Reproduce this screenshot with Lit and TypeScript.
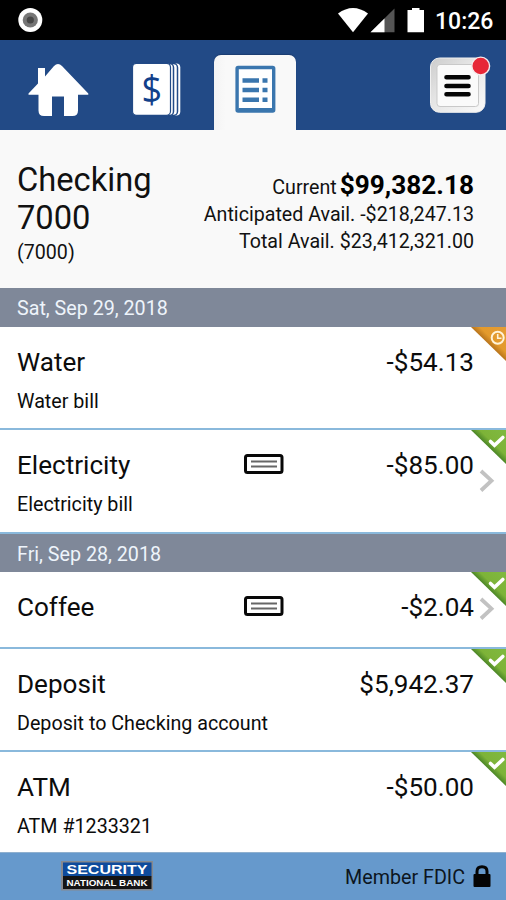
import { LitElement, html, css, svg, nothing } from "lit";
import { customElement, property } from "lit/decorators.js";

interface Transaction {
  name: string;
  amount: string;
  memo?: string;
  pending?: boolean;
  check?: boolean;
  more?: boolean;
}

interface Day {
  date: string;
  items: Transaction[];
}

const DAYS: Day[] = [
  {
    date: "Sat, Sep 29, 2018",
    items: [
      { name: "Water", amount: "-$54.13", memo: "Water bill", pending: true },
      { name: "Electricity", amount: "-$85.00", memo: "Electricity bill", check: true, more: true },
    ],
  },
  {
    date: "Fri, Sep 28, 2018",
    items: [
      { name: "Coffee", amount: "-$2.04", check: true, more: true },
      { name: "Deposit", amount: "$5,942.37", memo: "Deposit to Checking account" },
      { name: "ATM", amount: "-$50.00", memo: "ATM #1233321" },
    ],
  },
];

@customElement("status-bar")
class StatusBar extends LitElement {
  static styles = css`
    :host {
      display: flex;
      justify-content: space-between;
      flex-shrink: 0;
      height: 39.5px;
      background: #000;
      color: #fff;
    }
    .record { margin-left: 17px; }
    .right { display: flex; }
    .time {
      width: 77px;
      padding-left: 6px;
      box-sizing: border-box;
      font: 500 23px/43px Roboto, sans-serif;
      white-space: nowrap;
    }
  `;
  render() {
    return html`
      <svg class="record" width="26" height="39">
        <circle cx="13.3" cy="20" r="12" fill="#fff" />
        <circle cx="13.3" cy="20" r="7.6" fill="#777" />
        <circle cx="13.3" cy="20" r="3.6" fill="#484848" />
      </svg>
      <div class="right">
        <svg width="92" height="39" viewBox="337 0 92 39" fill="#fff">
          <path d="M338 13.5Q353 2.5 368 13.5L353 32.3Z" />
          <path d="M394.500 8.500V32.300H370.500Z" fill="#555" />
          <path d="M384.500 18.400V32.300H370.500Z" />
          <path d="M407.500 10H412V8H419.500V10H424V32.300H407.500Z" />
        </svg>
        <div class="time">10:26</div>
      </div>
    `;
  }
}

@customElement("nav-tabs")
class NavTabs extends LitElement {
  static styles = css`
    :host {
      display: flex;
      align-items: flex-end;
      flex-shrink: 0;
      height: 90.5px;
      background: #224a86;
    }
    .home { width: 117px; }
    .cards { width: 96.500px; }
    .active {
      width: 82.500px;
      height: 75px;
      background: linear-gradient(90deg, #f4f4f4, #f9f9f9 12px);
      border-radius: 7px 7px 0 0;
      box-shadow: 0 -1px 1px #1b3c70;
    }
    .menu { margin-left: auto; width: 84px; }
    svg { display: block; }
    .dollar { font: 38px "Open Sans", sans-serif; }
  `;
  render() {
    return html`
      <svg class="home" height="90" viewBox="0 40 117 90" fill="#fff">
        <path d="M28.500 93.500L38 83.500V68H45V76.500L54 66Q58 62 62 66L88.300 93.500V94.700H78V110.500Q78 116 72.500 116H64V96.500H52V116H44Q38.500 116 38.500 110.500V94.700H28.500Z" />
      </svg>
      <svg class="cards" height="90" viewBox="117 40 96.500 90">
        <rect x="150" y="63.500" width="30.300" height="52" rx="4" fill="#fff" />
        <rect x="146" y="63.500" width="31.500" height="52" rx="4" fill="#fff" stroke="#224a86" stroke-width="1.500" />
        <rect x="140" y="63.500" width="33.500" height="52" rx="4" fill="#fff" stroke="#224a86" stroke-width="1.500" />
        <rect x="132.500" y="63.300" width="38" height="52" rx="4" fill="#fff" stroke="#224a86" stroke-width="1.200" />
        <text class="dollar" transform="translate(151.700 102.500) scale(.95 1)" text-anchor="middle" fill="#12408a">$</text>
      </svg>
      <div class="active">
        <svg width="82" height="75" viewBox="213.500 55 82 75">
          <rect x="236.600" y="67.500" width="36.600" height="43.500" rx="1" fill="#fff" stroke="#3a76ae" stroke-width="3.400" />
          <path d="M238 109.500h34" stroke="#3a76ae" stroke-width="3" />
          ${[80.500, 90, 99.800].map(
            (y) => svg`<path d="M242 ${y}H258.500M262 ${y}H267" stroke="#3a76ae" stroke-width="4.600" />`,
          )}
        </svg>
      </div>
      <svg class="menu" height="90" viewBox="422 40 84 90">
        <defs>
          <linearGradient id="rim" x1="0" y1="0" x2="1" y2="1">
            <stop offset="0" stop-color="#ccc" />
            <stop offset=".4" stop-color="#e4e4e4" />
            <stop offset="1" stop-color="#fafafa" />
          </linearGradient>
        </defs>
        <rect x="430.500" y="58" width="54.500" height="54.300" rx="9" fill="url(#rim)" stroke="#f0f0f0" />
        <rect x="437" y="64.500" width="41.500" height="42" rx="3" fill="#fafafa" stroke="#c9c9c9" />
        <path d="M446.500 77.300H468.500M446.500 86H468.500M446.500 94.300H468.500" stroke="#050505" stroke-width="4.600" stroke-linecap="round" />
        <circle cx="480.700" cy="66" r="8.900" fill="#e72737" stroke="#f4ecee" stroke-width="1.400" />
      </svg>
    `;
  }
}

@customElement("account-summary")
class AccountSummary extends LitElement {
  static styles = css`
    :host {
      display: flex;
      justify-content: space-between;
      flex-shrink: 0;
      box-sizing: border-box;
      height: 158.400px;
      padding: 30.500px 32px 0 17px;
      background: #f9f9f9;
      color: #111;
      font: 19.650px/27px Roboto, sans-serif;
      white-space: nowrap;
    }
    .name { font-size: 32.700px; line-height: 38px; }
    .number { line-height: 31px; }
    .balances { text-align: right; padding-top: 9px; }
    .current {
      display: flex;
      justify-content: flex-end;
      align-items: baseline;
      gap: 3px;
      height: 31.500px;
      line-height: 30px;
    }
    .total { font-size: 26.200px; font-weight: 700; color: #000; }
  `;
  render() {
    return html`
      <div>
        <div class="name">Checking<br />7000</div>
        <div class="number">(7000)</div>
      </div>
      <div class="balances">
        <div class="current"><span>Current</span><span class="total">$99,382.18</span></div>
        <div>Anticipated Avail. -$218,247.13</div>
        <div>Total Avail. $23,412,321.00</div>
      </div>
    `;
  }
}

@customElement("transaction-row")
class TransactionRow extends LitElement {
  @property({ attribute: false }) item!: Transaction;

  static styles = css`
    :host {
      display: block;
      position: relative;
      box-sizing: border-box;
      padding: 17px 32px 12.500px 17px;
      background: #fff;
      border-bottom: 2px solid #8ab9dc;
      color: #0c0c0c;
      font: 19.700px/28px Roboto, sans-serif;
      white-space: nowrap;
    }
    .main {
      display: grid;
      grid-template-columns: 227px 40px 1fr;
      align-items: center;
      font-size: 26.100px;
      line-height: 36px;
    }
    .amount { grid-column: 3; text-align: right; }
    .memo { margin-top: 8px; }
    .space { height: 9.500px; }
    .corner { position: absolute; top: 0; right: 0; }
    .chevron { position: absolute; right: 11px; top: 38px; }
    .chevron.single { top: 24px; }
    svg { display: block; }
  `;
  render() {
    const t = this.item;
    return html`
      <div class="main">
        <span>${t.name}</span>
        ${t.check
          ? html`<svg width="40" height="22" viewBox="0 0 40 22" fill="none">
              <rect x="1.500" y="1.500" width="36.500" height="17" rx="2" stroke="#080808" stroke-width="3" />
              <path d="M7 7.500H33M7 12.500H33" stroke="#666" stroke-width="1.800" />
            </svg>`
          : nothing}
        <span class="amount">${t.amount}</span>
      </div>
      ${t.memo ? html`<div class="memo">${t.memo}</div>` : html`<div class="space"></div>`}
      <svg class="corner" width="35" height="35" viewBox="0 0 35 35" fill="none">
        <defs>
          <linearGradient id="fill" x1=".5" y1=".5" x2="1" y2="0">
            <stop offset="0" stop-color=${t.pending ? "#b8741c" : "#4b8626"} />
            <stop offset=".25" stop-color=${t.pending ? "#e39a2c" : "#7db338"} />
            <stop offset="1" stop-color=${t.pending ? "#e59c35" : "#80b940"} />
          </linearGradient>
        </defs>
        <path d="M0 0H35V34Z" fill="url(#fill)" />
        ${t.pending
          ? svg`<circle cx="26.700" cy="10.800" r="6" stroke="#fff3d8" stroke-width="2" />
              <path d="M26.700 7V11.300H30.500" stroke="#fff3d8" stroke-width="1.600" />`
          : svg`<path d="M19.500 11.500L23.500 15.300L31.800 7.500" stroke="#fff" stroke-width="3.600" stroke-linecap="round" />`}
      </svg>
      ${t.more
        ? html`<svg class="chevron ${t.memo ? "" : "single"}" width="16" height="26" viewBox="0 0 16 26" fill="none">
            <path d="M2 3L12.500 12.700L2 22.500" stroke="#c2c2c2" stroke-width="3.800" />
          </svg>`
        : nothing}
    `;
  }
}

@customElement("app-footer")
class AppFooter extends LitElement {
  static styles = css`
    :host {
      display: flex;
      justify-content: space-between;
      align-items: center;
      flex-shrink: 0;
      box-sizing: border-box;
      height: 48px;
      padding: 0 15px 0 61px;
      border-top: 1px solid #8fb0cf;
      background: #6699cc;
      color: #0c1520;
      font: 19.700px/25px Roboto, sans-serif;
    }
    .fdic { display: flex; align-items: center; gap: 8px; padding-top: 1px; }
    .bank { font-family: "Liberation Sans", sans-serif; font-weight: 700; }
    svg { display: block; }
  `;
  render() {
    return html`
      <svg class="bank" width="92" height="31" viewBox="0 0 92 31" fill="#fff">
        <rect width="92" height="29.500" y="0" fill="#85898f" />
        <rect x="2" y="1.500" width="88.500" height="14" fill="#0e4b9c" />
        <rect x="2" y="15" width="88.500" height="13" fill="#141414" />
        <text x="5.500" y="12.600" font-size="12.500" textLength="81" lengthAdjust="spacingAndGlyphs">SECURITY</text>
        <text x="5.500" y="25" font-size="9" textLength="81" lengthAdjust="spacingAndGlyphs">NATIONAL BANK</text>
      </svg>
      <div class="fdic">
        <span>Member FDIC</span>
        <svg width="18" height="24" viewBox="0 0 18 24">
          <rect x=".5" y="9" width="17" height="13" rx="1" fill="#050505" />
          <path d="M4 10V6.500Q4 1.700 9 1.700T14 6.500V10" fill="none" stroke="#050505" stroke-width="3" />
        </svg>
      </div>
    `;
  }
}

@customElement("app-root")
class AppRoot extends LitElement {
  static styles = css`
    :host {
      display: flex;
      flex-direction: column;
      width: 506px;
      height: 900px;
      overflow: hidden;
      background: #fff;
    }
    .list { flex: 1; min-height: 0; overflow: hidden; }
    .date {
      box-sizing: border-box;
      height: 38.300px;
      padding-left: 17px;
      background: #7f8899;
      color: #eef4fb;
      font: 19.700px/41px Roboto, sans-serif;
    }
  `;
  render() {
    return html`
      <status-bar></status-bar>
      <nav-tabs></nav-tabs>
      <account-summary></account-summary>
      <div class="list">
        ${DAYS.map(
          (day) => html`
            <div class="date">${day.date}</div>
            ${day.items.map((item) => html`<transaction-row .item=${item}></transaction-row>`)}
          `,
        )}
      </div>
      <app-footer></app-footer>
    `;
  }
}
